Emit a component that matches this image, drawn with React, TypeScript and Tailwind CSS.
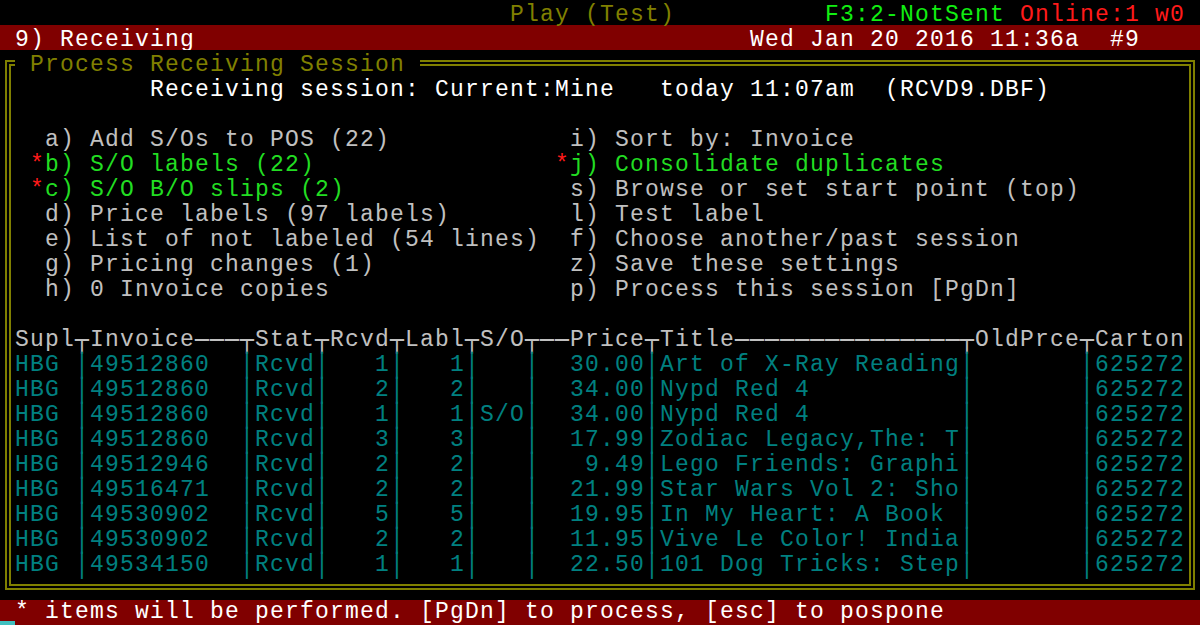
import React from "react";

type Tone = "gray" | "white" | "olive" | "green" | "lime" | "red" | "teal";

const tone: Record<Tone, string> = {
  gray: "text-[#c0c0c0]",
  white: "text-white",
  olive: "text-[#808000]",
  green: "text-[#22dd22]",
  lime: "text-[#11ee11]",
  red: "text-[#ff1a1a]",
  teal: "text-[#008080]",
};

interface Seg {
  t: string;
  c?: Tone;
  box?: boolean;
  bg?: boolean;
}

const sp = (n: number): Seg => ({ t: " ".repeat(n) });
const padEnd = (s: string, n: number) => s.padEnd(n, " ");
const padStart = (s: string, n: number) => s.padStart(n, " ");

// one terminal line, every char cell is 15px wide
function Line({ segs, className = "" }: { segs: Seg[]; className?: string }) {
  return (
    <div className={`flex h-[25px] ${className}`}>
      {segs.map((s, i) => (
        <span
          key={i}
          className={`shrink-0 whitespace-pre ${tone[s.c ?? "gray"]} ${
            s.box ? "font-['DejaVu_Sans_Mono']" : ""
          } ${s.bg ? "relative bg-black" : ""}`}
          style={{ width: s.t.length * 15 }}
        >
          {s.t}
        </span>
      ))}
    </div>
  );
}

const menu: { left: string; ls?: boolean; right: string; rs?: boolean }[] = [
  { left: "a) Add S/Os to POS (22)", right: "i) Sort by: Invoice" },
  { left: "b) S/O labels (22)", ls: true, right: "j) Consolidate duplicates", rs: true },
  { left: "c) S/O B/O slips (2)", ls: true, right: "s) Browse or set start point (top)" },
  { left: "d) Price labels (97 labels)", right: "l) Test label" },
  { left: "e) List of not labeled (54 lines)", right: "f) Choose another/past session" },
  { left: "g) Pricing changes (1)", right: "z) Save these settings" },
  { left: "h) 0 Invoice copies", right: "p) Process this session [PgDn]" },
];

const items = [
  ["HBG", "49512860", "Rcvd", "1", "1", "", "30.00", "Art of X-Ray Reading"],
  ["HBG", "49512860", "Rcvd", "2", "2", "", "34.00", "Nypd Red 4"],
  ["HBG", "49512860", "Rcvd", "1", "1", "S/O", "34.00", "Nypd Red 4"],
  ["HBG", "49512860", "Rcvd", "3", "3", "", "17.99", "Zodiac Legacy,The: T"],
  ["HBG", "49512946", "Rcvd", "2", "2", "", "9.49", "Lego Friends: Graphi"],
  ["HBG", "49516471", "Rcvd", "2", "2", "", "21.99", "Star Wars Vol 2: Sho"],
  ["HBG", "49530902", "Rcvd", "5", "5", "", "19.95", "In My Heart: A Book"],
  ["HBG", "49530902", "Rcvd", "2", "2", "", "11.95", "Vive Le Color! India"],
  ["HBG", "49534150", "Rcvd", "1", "1", "", "22.50", "101 Dog Tricks: Step"],
];

const header: Seg[] = [
  { t: "Supl" },
  { t: "┬", box: true },
  { t: "Invoice" },
  { t: "───", box: true },
  { t: "┬", box: true },
  { t: "Stat" },
  { t: "┬", box: true },
  { t: "Rcvd" },
  { t: "┬", box: true },
  { t: "Labl" },
  { t: "┬", box: true },
  { t: "S/O" },
  { t: "┬──", box: true },
  { t: "Price" },
  { t: "┬", box: true },
  { t: "Title" },
  { t: "───────────────", box: true },
  { t: "┬", box: true },
  { t: "OldPrce" },
  { t: "┬", box: true },
  { t: "Carton" },
];

function itemSegs(r: string[]): Seg[] {
  const bar: Seg = { t: "│", c: "teal", box: true };
  const cell = (t: string): Seg => ({ t, c: "teal" });
  return [
    cell(padEnd(r[0], 4)),
    bar,
    cell(padEnd(r[1], 10)),
    bar,
    cell(padEnd(r[2], 4)),
    bar,
    cell(padStart(r[3], 4)),
    bar,
    cell(padStart(r[4], 4)),
    bar,
    cell(padEnd(r[5], 3)),
    bar,
    cell(padStart(r[6], 7)),
    bar,
    cell(padEnd(r[7], 20)),
    bar,
    cell(" ".repeat(7)),
    bar,
    cell("625272"),
  ];
}

export default function App() {
  return (
    <div className="h-[625px] w-[1200px] overflow-hidden bg-black font-['Liberation_Mono','DejaVu_Sans_Mono',monospace] text-[23px] leading-[30px] tracking-[1.198px]">
      {/* status line */}
      <Line
        segs={[
          sp(34),
          { t: "Play (Test)", c: "olive" },
          sp(10),
          { t: "F3:2-NotSent", c: "lime" },
          sp(1),
          { t: "Online:1 w0", c: "red" },
        ]}
      />
      <Line
        className="bg-[#800000]"
        segs={[
          sp(1),
          { t: "9) Receiving", c: "white" },
          sp(37),
          { t: "Wed Jan 20 2016 11:36a  #9", c: "white" },
        ]}
      />

      {/* Main frame */}
      <div className="mx-[5px] mt-[10px] border-[6px] border-double border-[#808000] pb-[9px] pl-[4px]">
        <Line className="-mt-[16px]" segs={[{ t: " Process Receiving Session ", c: "olive", bg: true }]} />
        <Line
          segs={[
            sp(9),
            { t: "Receiving session: Current:Mine   today 11:07am  (RCVD9.DBF)", c: "white" },
          ]}
        />
        <Line segs={[]} />
        {menu.map((m) => (
          <Line
            key={m.left}
            segs={[
              sp(1),
              m.ls ? { t: "*", c: "red" } : sp(1),
              { t: padEnd(m.left, 34), c: m.ls ? "green" : "gray" },
              m.rs ? { t: "*", c: "red" } : sp(1),
              { t: m.right, c: m.rs ? "green" : "gray" },
            ]}
          />
        ))}
        <Line segs={[]} />
        <Line segs={header} />
        {items.map((r, i) => (
          <Line key={i} segs={itemSegs(r)} />
        ))}
      </div>

      {/* Footer */}
      <div className="mt-[10px] flex h-[25px] bg-[#800000] leading-[25px]">
        <span className="flex h-[25px] w-[15px] shrink-0 items-end">
          <span className="h-[4px] w-[15px] bg-[#40c0c0]" />
        </span>
        <Line
          segs={[
            {
              t: "* items will be performed. [PgDn] to process, [esc] to pospone",
              c: "white",
            },
          ]}
        />
      </div>
    </div>
  );
}
